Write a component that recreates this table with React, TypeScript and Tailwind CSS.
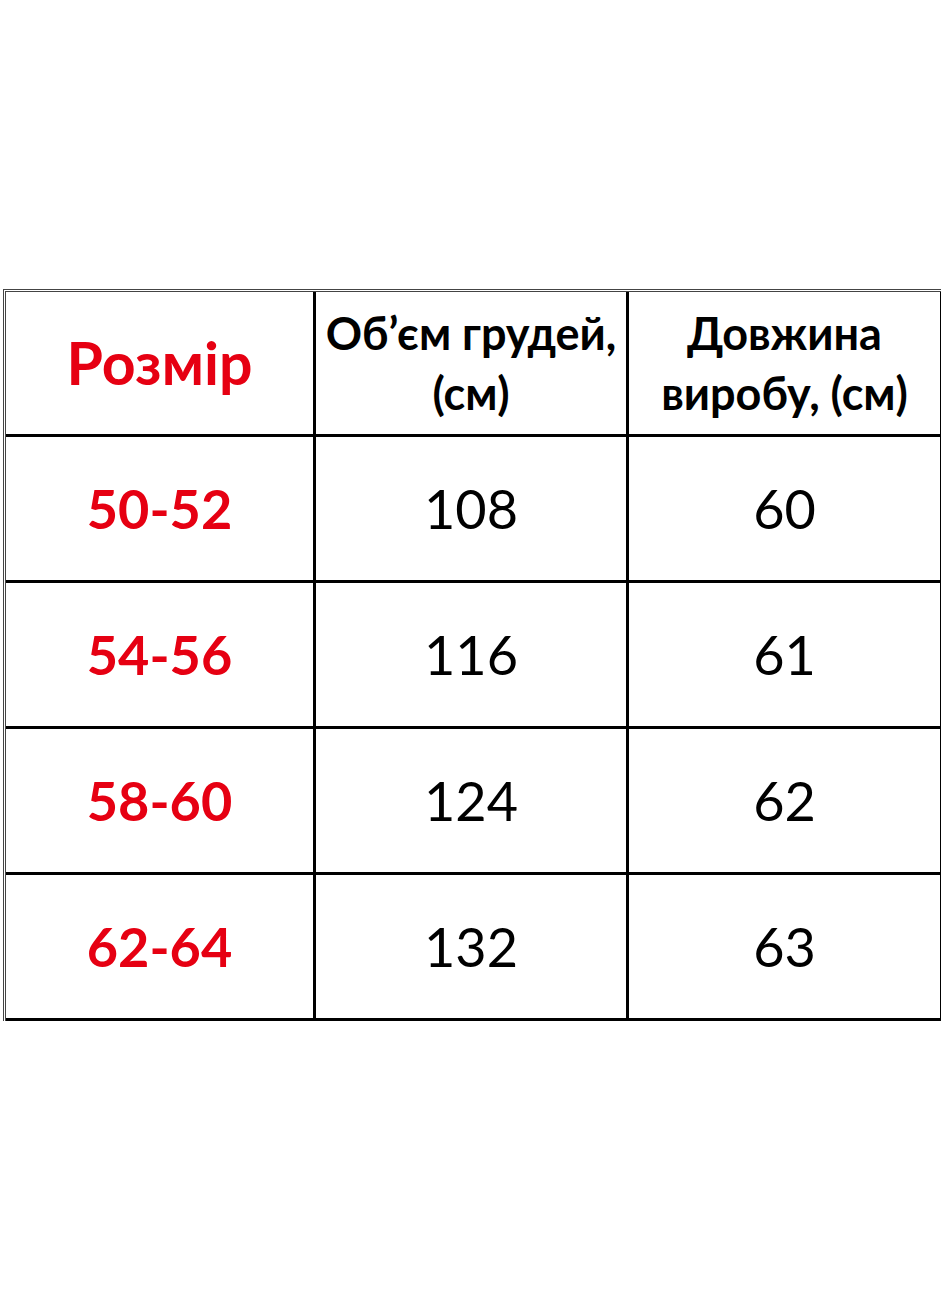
const rows = [
  { size: '50-52', chest: '108', length: '60' },
  { size: '54-56', chest: '116', length: '61' },
  { size: '58-60', chest: '124', length: '62' },
  { size: '62-64', chest: '132', length: '63' },
]

const font = { fontFamily: 'Lato, "Open Sans", sans-serif' }

export default function App() {
  return (
    <div className="h-[1312px] w-[943px] bg-white" style={font}>
      <div className="pl-[3px] pt-[289px]">
        <div className="grid w-[938px] grid-cols-[310px_313px_312px] border-l-[3px] border-t-[3px] border-double border-l-[#444] border-t-[#444]">
          <div className="flex h-[145px] items-center justify-center border-r-[3px] border-b-[3px] border-black">
            <span className="text-[59px] font-bold text-[#e60012]">Розмір</span>
          </div>
          <div className="flex h-[145px] items-center justify-center border-r-[3px] border-b-[3px] border-black text-center">
            <span className="text-[45px] font-bold leading-[60px] text-black">
              Об’єм грудей,
              <br />
              (см)
            </span>
          </div>
          <div className="flex h-[145px] items-center justify-center border-r border-b-[3px] border-black text-center">
            <span className="text-[45px] font-bold leading-[60px] text-black">
              Довжина
              <br />
              виробу, (см)
            </span>
          </div>
          {rows.map((r) => (
            <div key={r.size} className="contents">
              <div className="flex h-[146px] items-center justify-center border-r-[3px] border-b-[3px] border-black">
                <span className="text-[54px] font-bold text-[#e60012]">{r.size}</span>
              </div>
              <div className="flex h-[146px] items-center justify-center border-r-[3px] border-b-[3px] border-black">
                <span className="text-[54px] text-black">{r.chest}</span>
              </div>
              <div className="flex h-[146px] items-center justify-center border-r border-b-[3px] border-black">
                <span className="text-[54px] text-black">{r.length}</span>
              </div>
            </div>
          ))}
        </div>
      </div>
    </div>
  )
}
